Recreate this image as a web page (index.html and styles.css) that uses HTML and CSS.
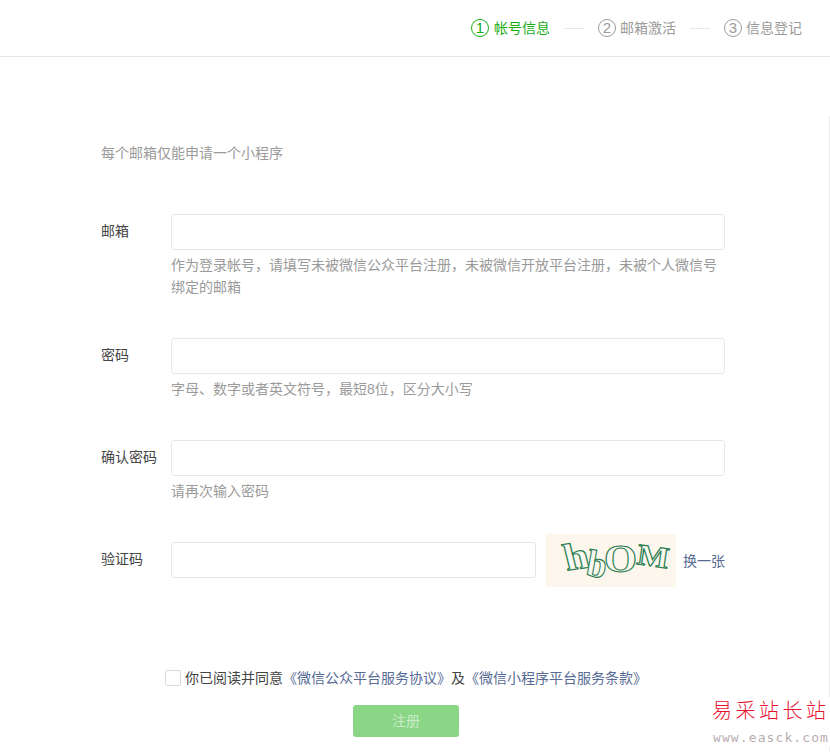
FILE: index.html
```html
<!DOCTYPE html>
<html lang="zh-CN">
<head>
<meta charset="utf-8">
<title>小程序注册</title>
<link rel="stylesheet" href="styles.css">
</head>
<body>
<header class="header">
  <ol class="steps">
    <li class="step step-active"><span class="step-num">1</span><span class="step-name">帐号信息</span></li>
    <li class="step-line"></li>
    <li class="step"><span class="step-num">2</span><span class="step-name">邮箱激活</span></li>
    <li class="step-line"></li>
    <li class="step"><span class="step-num">3</span><span class="step-name">信息登记</span></li>
  </ol>
</header>
<main class="main">
  <p class="tip">每个邮箱仅能申请一个小程序</p>
  <form class="form">
    <div class="row row-email">
      <label class="label">邮箱</label>
      <div class="field">
        <input class="input" type="text">
        <p class="hint">作为登录帐号，请填写未被微信公众平台注册，未被微信开放平台注册，未被个人微信号绑定的邮箱</p>
      </div>
    </div>
    <div class="row row-next">
      <label class="label">密码</label>
      <div class="field">
        <input class="input" type="password">
        <p class="hint">字母、数字或者英文符号，最短8位，区分大小写</p>
      </div>
    </div>
    <div class="row row-next">
      <label class="label">确认密码</label>
      <div class="field">
        <input class="input" type="password">
        <p class="hint">请再次输入密码</p>
      </div>
    </div>
    <div class="row row-next">
      <label class="label">验证码</label>
      <div class="field code-field">
        <input class="input input-code" type="text">
        <svg class="captcha" width="130" height="53" viewBox="0 0 130 53">
          <rect width="130" height="53" fill="#fcf6ec"/>
          <g class="captcha-text">
            <text x="17" y="37" transform="rotate(-8 17 37) skewX(6)" font-size="38" textLength="25" lengthAdjust="spacingAndGlyphs">h</text>
            <text x="39" y="41" transform="rotate(10 39 41)" font-size="38" textLength="20" lengthAdjust="spacingAndGlyphs">b</text>
            <text x="58" y="38" font-size="40" textLength="33" lengthAdjust="spacingAndGlyphs">O</text>
            <text x="90" y="30" transform="rotate(8 90 30)" font-size="30" textLength="32" lengthAdjust="spacingAndGlyphs">M</text>
          </g>
        </svg>
        <a class="refresh">换一张</a>
      </div>
    </div>
    <div class="agree">
      <span class="checkbox"></span>
      <span class="agree-text">你已阅读并同意<a class="link">《微信公众平台服务协议》</a>及<a class="link">《微信小程序平台服务条款》</a></span>
    </div>
    <div class="actions">
      <button class="submit" type="button">注册</button>
    </div>
  </form>
</main>
<div class="edge"></div>
<aside class="watermark">
  <div class="wm-cn">易采站长站</div>
  <div class="wm-en">www.easck.com</div>
</aside>
</body>
</html>
```
FILE: styles.css
```css
* { box-sizing: border-box; }
html, body { margin: 0; padding: 0; }
body {
  height: 752px;
  overflow: hidden;
  background: #fff;
  color: #444;
  font: 14px/22px "Liberation Sans", "Noto Sans CJK SC", sans-serif;
}
.header {
  height: 57px;
  border-bottom: 1px solid #e7e7eb;
  display: flex;
  justify-content: flex-end;
  align-items: center;
  padding-right: 28px;
}
.steps {
  display: flex;
  align-items: center;
  list-style: none;
  margin: 0;
  padding: 0;
  color: #9a9a9a;
}
.step { display: flex; align-items: center; }
.step-num {
  width: 18px;
  height: 18px;
  border: 1px solid #9a9a9a;
  border-radius: 50%;
  display: flex;
  align-items: center;
  justify-content: center;
  font-size: 15px;
  line-height: 16px;
  margin-right: 4px;
}
.step-line {
  width: 20px;
  height: 1px;
  background: #e7e7eb;
  margin: 0 14px;
}
.step-active { color: #1aad19; }
.step-active .step-num { border-color: #1aad19; margin-right: 5px; }
.main { padding: 85px 105px 0 101px; }
.tip { margin: 0; color: #9a9a9a; }
.form { margin-top: 50px; }
.row { display: flex; align-items: flex-start; }
.row-next { margin-top: 40px; }
.label { width: 70px; flex: none; line-height: 34px; }
.field { flex: 1; min-width: 0; }
.input {
  display: block;
  width: 100%;
  height: 36px;
  padding: 0 10px;
  border: 1px solid #e7e7eb;
  border-radius: 3px;
  background: #fff;
  outline: none;
}
.hint { margin: 4px 0 0; color: #9a9a9a; }
.code-field { display: flex; align-items: center; height: 36px; }
.input-code { width: 365px; flex: none; }
.captcha { flex: none; margin-left: 10px; margin-top: 1px; display: block; }
.captcha-text text {
  font-family: "Liberation Serif", serif;
  font-weight: bold;
  fill: #fbf8f0;
  stroke: #2a7d52;
  stroke-width: 1.1;
}
.refresh { margin-left: 7px; margin-top: 2px; color: #576b95; white-space: nowrap; }
.agree {
  display: flex;
  align-items: center;
  margin-top: 89px;
  margin-left: 64px;
}
.checkbox {
  width: 16px;
  height: 16px;
  border: 1px solid #d9dadc;
  border-radius: 2px;
  margin-right: 4px;
}
.link { color: #576b95; }
.actions { display: flex; margin-top: 16px; margin-left: 252px; }
.submit {
  width: 106px;
  height: 32px;
  border: 0;
  border-radius: 3px;
  background: #8bd586;
  color: #c9ecc7;
  font: inherit;
}
.edge {
  position: absolute;
  right: 0;
  top: 116px;
  bottom: 0;
  width: 1px;
  background: #ececec;
}
.watermark {
  position: absolute;
  right: 0;
  top: 697px;
  width: 118px;
  background: #fff;
}
.wm-cn {
  color: #e8102f;
  font-size: 20px;
  line-height: 26px;
  letter-spacing: 3.5px;
  font-family: "Noto Sans CJK SC", sans-serif;
  font-weight: 300;
  white-space: nowrap;
}
.wm-en {
  margin-top: 6px;
  padding-left: 1px;
  color: #b9aeb0;
  font-size: 13px;
  line-height: 18px;
  letter-spacing: 1.1px;
  font-family: "DejaVu Sans Mono", monospace;
  white-space: nowrap;
}
```
